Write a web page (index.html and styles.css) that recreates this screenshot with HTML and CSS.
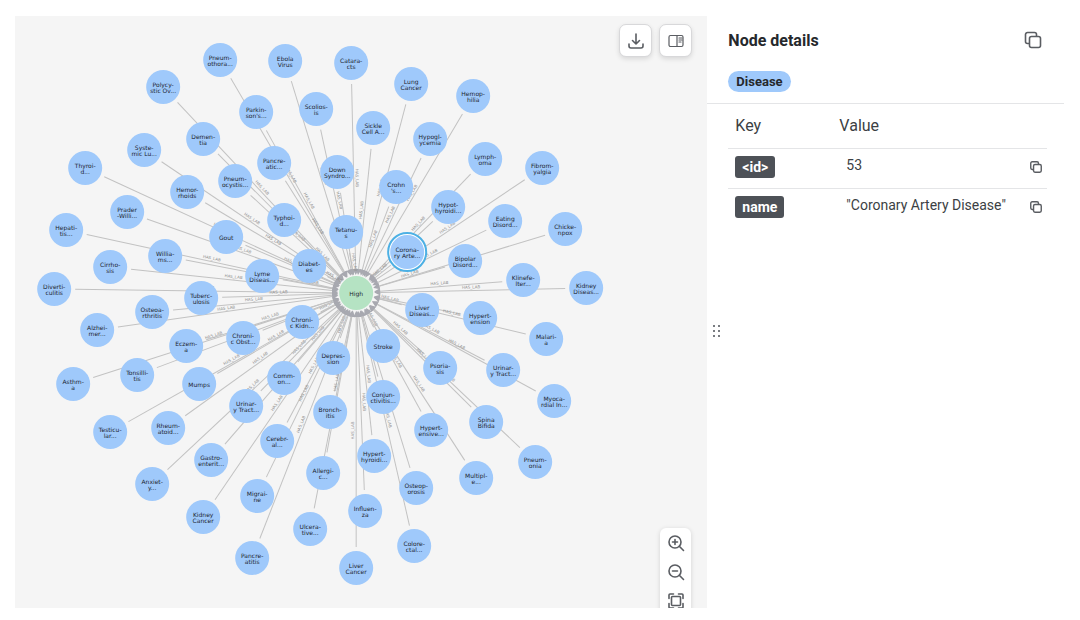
FILE: index.html
```html
<!DOCTYPE html>
<html lang="en">
<head>
    <meta charset="UTF-8">
    <meta name="viewport" content="width=device-width, initial-scale=1.0">
    <title>Graph Explorer</title>
    <link rel="stylesheet" href="styles.css">
</head>
<body>
    <div class="explorer">
        <main class="graph-pane">
            <svg id="graph" class="graph" viewBox="15 16 692 592" role="img" aria-label="Disease graph">
                <g id="edges"></g>
                <g id="nodes"></g>
            </svg>
            <div class="top-actions">
                <button class="icon-button" aria-label="Download">
                    <svg width="18" height="18" viewBox="0 0 18 18"><path d="M9 2v10M5.500 8.500L9 12l3.500-3.500M2 12v2a2 2 0 0 0 2 2h10a2 2 0 0 0 2-2V12"/></svg>
                </button>
                <button class="icon-button" aria-label="Toggle details panel">
                    <svg class="thin" width="18" height="18" viewBox="0 0 18 18"><rect x="2" y="3.500" width="14" height="11" rx="1.500"/><path d="M10 3.500v11M12 6h3M12 8h3M12 10h2"/></svg>
                </button>
            </div>
            <div class="zoom-bar">
                <button aria-label="Zoom in">
                    <svg width="18" height="18" viewBox="0 0 18 18"><circle cx="8" cy="8" r="6"/><path d="M12.300 12.300L16.500 16.500M5.500 8h5M8 5.500v5"/></svg>
                </button>
                <button aria-label="Zoom out">
                    <svg width="18" height="18" viewBox="0 0 18 18"><circle cx="8" cy="8" r="6"/><path d="M12.300 12.300L16.500 16.500M5.500 8h5"/></svg>
                </button>
                <button aria-label="Fit to screen">
                    <svg width="18" height="18" viewBox="0 0 18 18"><rect x="4.500" y="4.500" width="9" height="9" rx="1"/><path d="M2 6.500V3a1 1 0 0 1 1-1h3.500M11.500 2H15a1 1 0 0 1 1 1v3.500M16 11.500V15a1 1 0 0 1-1 1h-3.500M6.500 16H3a1 1 0 0 1-1-1v-3.500"/></svg>
                </button>
            </div>
        </main>
        <aside class="details">
            <div class="resize-handle">
                <svg width="10" height="14" viewBox="0 0 10 14"><circle cx="2" cy="2" r="1"/><circle cx="7" cy="2" r="1"/><circle cx="2" cy="7" r="1"/><circle cx="7" cy="7" r="1"/><circle cx="2" cy="12" r="1"/><circle cx="7" cy="12" r="1"/></svg>
            </div>
            <header class="details-header">
                <div class="title-row">
                    <h2>Node details</h2>
                    <button class="copy" aria-label="Copy all">
                        <svg width="20" height="20" viewBox="0 0 20 20"><path d="M6 13.500H4.500a2 2 0 0 1-2-2v-7a2 2 0 0 1 2-2h7a2 2 0 0 1 2 2V6"/><rect x="6.500" y="6.500" width="11" height="11" rx="2"/></svg>
                    </button>
                </div>
                <span class="label">Disease</span>
            </header>
            <table>
                <thead>
                    <tr><th class="key">Key</th><th>Value</th><th class="action"></th></tr>
                </thead>
                <tbody>
                    <tr>
                        <td><span class="tag">&lt;id&gt;</span></td>
                        <td class="value">53</td>
                        <td class="action">
                            <button class="copy" aria-label="Copy id">
                                <svg width="14" height="14" viewBox="0 0 20 20"><path d="M6 13.500H4.500a2 2 0 0 1-2-2v-7a2 2 0 0 1 2-2h7a2 2 0 0 1 2 2V6"/><rect x="6.500" y="6.500" width="11" height="11" rx="2"/></svg>
                            </button>
                        </td>
                    </tr>
                    <tr>
                        <td><span class="tag">name</span></td>
                        <td class="value">"Coronary Artery Disease"</td>
                        <td class="action">
                            <button class="copy" aria-label="Copy name">
                                <svg width="14" height="14" viewBox="0 0 20 20"><path d="M6 13.500H4.500a2 2 0 0 1-2-2v-7a2 2 0 0 1 2-2h7a2 2 0 0 1 2 2V6"/><rect x="6.500" y="6.500" width="11" height="11" rx="2"/></svg>
                            </button>
                        </td>
                    </tr>
                </tbody>
            </table>
        </aside>
    </div>
    <script src="graph.js"></script>
</body>
</html>
```
FILE: styles.css
```css
* {
    box-sizing: border-box;
}
body {
    margin: 0;
    background: #fff;
    color: #3c3f44;
    font-family: Roboto, "Liberation Sans", sans-serif;
    font-size: 16px;
}
button {
    border: none;
    background: none;
    padding: 0;
    cursor: pointer;
    display: flex;
    align-items: center;
    justify-content: center;
}
button svg {
    fill: none;
    stroke: #5a5d62;
    stroke-width: 1.6;
    stroke-linecap: round;
    stroke-linejoin: round;
}
button svg.thin {
    stroke-width: 1.2;
}
.explorer {
    display: grid;
    grid-template-columns: 1fr 34%;
    height: 100vh;
    padding: 16px 16px 12px 15px;
}

/* graph */
.graph-pane {
    position: relative;
    background: #f5f5f5;
    overflow: hidden;
    min-width: 0;
    min-height: 0;
}
.graph {
    display: block;
    width: 100%;
    height: 100%;
}
.edge {
    stroke: #c2c2c2;
    stroke-width: 1;
}
.arrow {
    fill: #a8a9b0;
}
.edge-label {
    font-family: "DejaVu Sans", sans-serif;
    font-size: 4px;
    fill: #8d8d8d;
    text-anchor: middle;
}
.node circle {
    fill: #9fc9fb;
}
.node.root circle {
    fill: #b5e3c3;
}
.node .ring {
    fill: #fff;
    stroke: #4cb0e4;
    stroke-width: 2;
}
.node text {
    font-family: "DejaVu Sans", sans-serif;
    font-size: 6px;
    fill: #1d2530;
    text-anchor: middle;
}
.top-actions {
    position: absolute;
    top: 8px;
    right: 15px;
    display: flex;
    gap: 7px;
}
.icon-button {
    width: 33px;
    height: 33px;
    background: #fff;
    border: 1px solid #d8d8da;
    border-radius: 7px;
    box-shadow: 0 2px 5px rgba(0, 0, 0, 0.12);
}
.zoom-bar {
    position: absolute;
    right: 16px;
    bottom: -18px;
    width: 31px;
    padding: 0 0 11px;
    background: #fff;
    border-radius: 6px;
    box-shadow: 0 1px 5px rgba(0, 0, 0, 0.14);
}
.zoom-bar button {
    width: 100%;
    height: 29px;
}

/* side panel */
.details {
    position: relative;
    min-width: 0;
}
.resize-handle {
    position: absolute;
    left: 5px;
    top: 52%;
    height: 14px;
}
.resize-handle svg {
    display: block;
    fill: #4d5157;
}
.details-header {
    padding: 14px 21px 11px;
    border-bottom: 1px solid #e4e5e7;
}
.title-row {
    display: flex;
    align-items: center;
    justify-content: space-between;
    height: 20px;
    margin-bottom: 21px;
}
h2 {
    margin: 0;
    font-size: 16px;
    color: #25282c;
}
.label {
    display: block;
    width: fit-content;
    background: #9fc9fb;
    color: #25282c;
    font-size: 13px;
    font-weight: 700;
    line-height: 21px;
    padding: 0 8px;
    border-radius: 11px;
}
table {
    width: calc(100% - 38px);
    margin: 0 17px 0 21px;
    border-collapse: collapse;
}
th {
    height: 44px;
    padding: 0 7px;
    text-align: left;
    font-weight: 400;
    font-size: 16px;
}
th.key {
    width: 104px;
}
td {
    height: 40px;
    padding: 7px 7px 0;
    border-top: 1px solid #e4e5e7;
    vertical-align: top;
}
td.value {
    padding: 7px 7px 0 14px;
    font-size: 14px;
    line-height: 18px;
}
.action {
    width: 24px;
    padding: 0 4px;
}
td.action {
    padding: 11px 4px 0;
}
td .copy {
    margin-left: auto;
}
td .copy svg {
    stroke-width: 2;
}
.tag {
    display: block;
    width: fit-content;
    background: #4d5157;
    color: #fff;
    font-size: 14px;
    font-weight: 700;
    line-height: 22px;
    padding: 0 7px;
    border-radius: 3px;
}
```
FILE: graph.js
```js
const root = { x: 356, y: 293, caption: ["High"] };

// x, y, caption lines
const diseases = [
    [220, 60, "Pneum-", "othora..."],
    [285, 61, "Ebola", "Virus"],
    [351, 63, "Catara-", "cts"],
    [411, 84, "Lung", "Cancer"],
    [473, 96, "Hemop-", "hilia"],
    [163, 87, "Polycy-", "stic Ov..."],
    [256, 112, "Parkin-", "son's..."],
    [316, 109, "Scolios-", "is"],
    [373, 128, "Sickle", "Cell A..."],
    [430, 139, "Hypogl-", "ycemia"],
    [203, 139, "Demen-", "tia"],
    [144, 150, "Syste-", "mic Lu..."],
    [85, 168, "Thyroi-", "d..."],
    [274, 163, "Pancre-", "atic..."],
    [337, 172, "Down", "Syndro..."],
    [485, 159, "Lymph-", "oma"],
    [542, 168, "Fibrom-", "yalgia"],
    [187, 192, "Hemor-", "rhoids"],
    [235, 181, "Pneum-", "ocystis..."],
    [396, 187, "Crohn", "'s..."],
    [448, 207, "Hypot-", "hyroidi..."],
    [127, 212, "Prader", "-Willi..."],
    [66, 230, "Hepati-", "tis..."],
    [226, 237, "Gout"],
    [284, 220, "Typhoi-", "d..."],
    [346, 232, "Tetanu-", "s"],
    [505, 221, "Eating", "Disord..."],
    [565, 229, "Chicke-", "npox"],
    [165, 256, "Willia-", "ms..."],
    [110, 267, "Cirrho-", "sis"],
    [309, 266, "Diabet-", "es"],
    [262, 276, "Lyme", "Diseas..."],
    [407, 252, "Corona-", "ry Arte..."],
    [465, 261, "Bipolar", "Disord..."],
    [523, 280, "Klinefe-", "lter..."],
    [586, 288, "Kidney", "Diseas..."],
    [54, 289, "Diverti-", "culitis"],
    [201, 298, "Tuberc-", "ulosis"],
    [152, 312, "Osteoa-", "rthritis"],
    [302, 322, "Chroni-", "c Kidn..."],
    [422, 310, "Liver", "Diseas..."],
    [480, 318, "Hypert-", "ension"],
    [546, 339, "Malari-", "a"],
    [97, 330, "Alzhei-", "mer..."],
    [186, 346, "Eczem-", "a"],
    [243, 338, "Chroni-", "c Obst..."],
    [333, 358, "Depres-", "sion"],
    [383, 346, "Stroke"],
    [440, 368, "Psoria-", "sis"],
    [503, 370, "Urinar-", "y Tract..."],
    [73, 384, "Asthm-", "a"],
    [137, 375, "Tonsilli-", "tis"],
    [199, 384, "Mumps"],
    [284, 378, "Comm-", "on..."],
    [383, 397, "Conjun-", "ctivitis..."],
    [554, 401, "Myoca-", "rdial In..."],
    [110, 432, "Testicu-", "lar..."],
    [168, 428, "Rheum-", "atoid..."],
    [246, 406, "Urinar-", "y Tract..."],
    [330, 412, "Bronch-", "itis"],
    [431, 430, "Hypert-", "ensive..."],
    [486, 422, "Spina", "Bifida"],
    [211, 460, "Gastro-", "enterit..."],
    [277, 441, "Cerebr-", "al..."],
    [374, 456, "Hypert-", "hyroidi..."],
    [535, 462, "Pneum-", "onia"],
    [152, 484, "Anxiet-", "y..."],
    [323, 473, "Allergi-", "c..."],
    [416, 488, "Osteop-", "orosis"],
    [476, 478, "Multipl-", "e..."],
    [203, 517, "Kidney", "Cancer"],
    [257, 496, "Migrai-", "ne"],
    [310, 529, "Ulcera-", "tive..."],
    [365, 511, "Influen-", "za"],
    [252, 558, "Pancre-", "atitis"],
    [356, 568, "Liver", "Cancer"],
    [414, 546, "Colore-", "ctal..."]
];

const radius = 17;
const selected = "Corona-";
const edges = document.getElementById("edges");
const nodes = document.getElementById("nodes");

function add(parent, tag, attrs, text) {
    const el = document.createElementNS("http://www.w3.org/2000/svg", tag);
    for (const name in attrs) el.setAttribute(name, attrs[name]);
    if (text) el.textContent = text;
    parent.appendChild(el);
    return el;
}

function drawEdge(x, y) {
    const length = Math.hypot(root.x - x, root.y - y);
    const angle = Math.atan2(root.y - y, root.x - x) * 180 / Math.PI;
    const g = add(edges, "g", { transform: `translate(${x} ${y}) rotate(${angle})` });
    add(g, "line", { class: "edge", x1: radius + 4, y1: 0, x2: length - 24, y2: 0 });
    add(g, "path", { class: "arrow", d: `M${length - 18} 0l-6 -3v6z` });

    // keep the label readable when the edge runs right to left
    const flip = Math.abs(angle) > 90 ? " rotate(180)" : "";
    add(g, "text", { class: "edge-label", y: -2, transform: `translate(${length / 2} 0)${flip}` }, "HAS_LAB");
}

function drawNode(x, y, caption, type) {
    const g = add(nodes, "g", { class: `node ${type}`, transform: `translate(${x} ${y})` });
    if (caption[0] === selected) add(g, "circle", { class: "ring", r: 19 });
    add(g, "circle", { r: radius });
    const top = caption.length > 1 ? 0 : 3;
    caption.forEach((line, i) => add(g, "text", { y: top + i * 6 }, line));
}

diseases.forEach(([x, y]) => drawEdge(x, y));
diseases.forEach(([x, y, ...caption]) => drawNode(x, y, caption, "disease"));
drawNode(root.x, root.y, root.caption, "root");
```
